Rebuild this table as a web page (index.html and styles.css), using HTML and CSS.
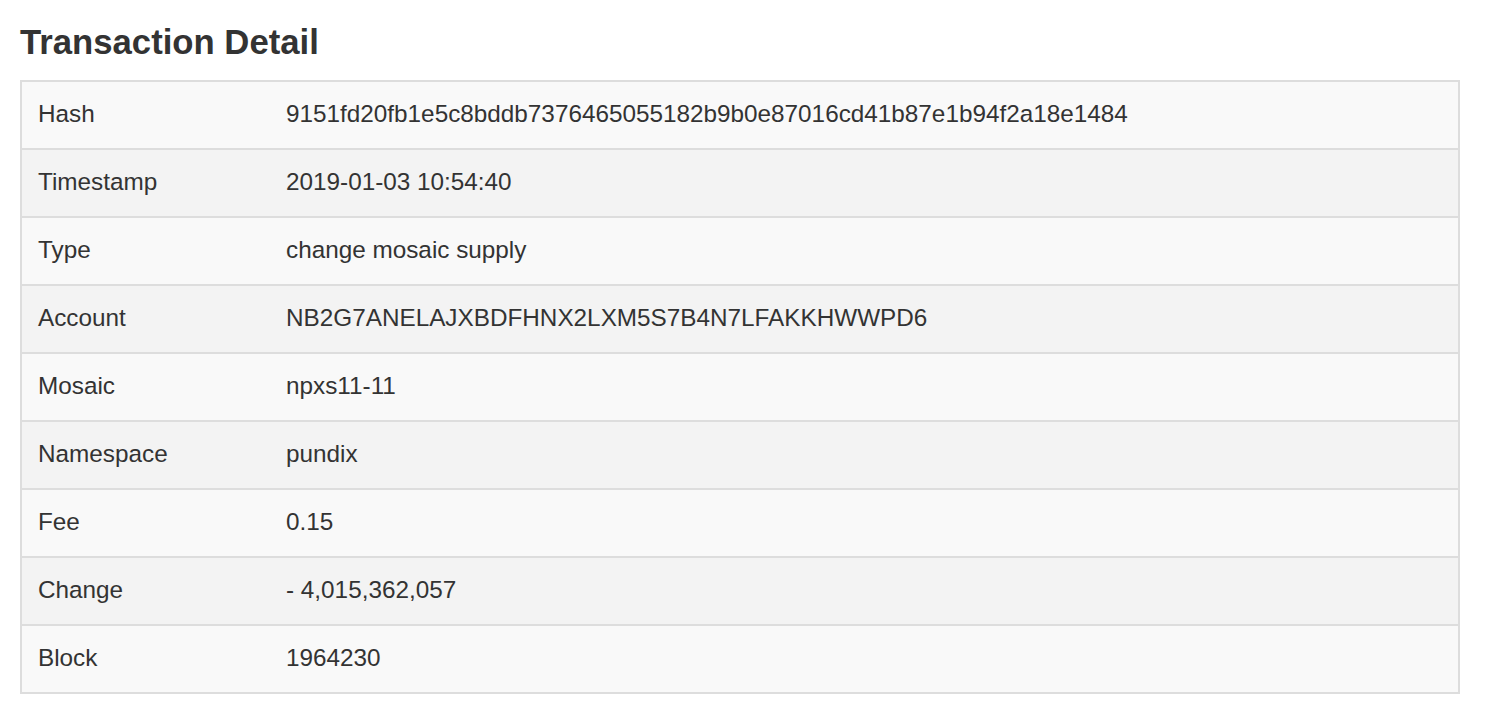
FILE: index.html
```html
<!DOCTYPE html>
<html lang="en">
<head>
<meta charset="utf-8">
<title>Transaction Detail</title>
<link rel="stylesheet" href="styles.css">
</head>
<body>
<div class="page">
  <h1 class="title">Transaction Detail</h1>
  <table class="detail">
    <tbody>
      <tr><td class="label">Hash</td><td>9151fd20fb1e5c8bddb7376465055182b9b0e87016cd41b87e1b94f2a18e1484</td></tr>
      <tr><td class="label">Timestamp</td><td>2019-01-03 10:54:40</td></tr>
      <tr><td class="label">Type</td><td>change mosaic supply</td></tr>
      <tr><td class="label">Account</td><td>NB2G7ANELAJXBDFHNX2LXM5S7B4N7LFAKKHWWPD6</td></tr>
      <tr><td class="label">Mosaic</td><td>npxs11-11</td></tr>
      <tr><td class="label">Namespace</td><td>pundix</td></tr>
      <tr><td class="label">Fee</td><td>0.15</td></tr>
      <tr><td class="label">Change</td><td>- 4,015,362,057</td></tr>
      <tr><td class="label">Block</td><td>1964230</td></tr>
    </tbody>
  </table>
</div>
</body>
</html>
```

FILE: styles.css
```css
html, body {
  margin: 0;
  padding: 0;
  background: #ffffff;
}
body {
  font-family: "Liberation Sans", Arial, Helvetica, sans-serif;
  color: #333333;
}
.page {
  padding: 0 50px 0 20px;
}
.title {
  margin: 0;
  padding-top: 22px;
  height: 80px;
  box-sizing: border-box;
  font-size: 34.7px;
  font-weight: bold;
  line-height: 40px;
  color: #333333;
}
.detail {
  width: 1440px;
  border-collapse: collapse;
  border: 2px solid #dddddd;
  font-size: 24.3px;
  line-height: 34px;
}
.detail td {
  padding: 15px 16px 17px;
  border-top: 2px solid #dddddd;
  text-align: left;
  vertical-align: top;
}
.detail td.label {
  width: 216px;
}
.detail tr:nth-child(odd) td {
  background: #f9f9f9;
}
.detail tr:nth-child(even) td {
  background: #f3f3f3;
}
```
